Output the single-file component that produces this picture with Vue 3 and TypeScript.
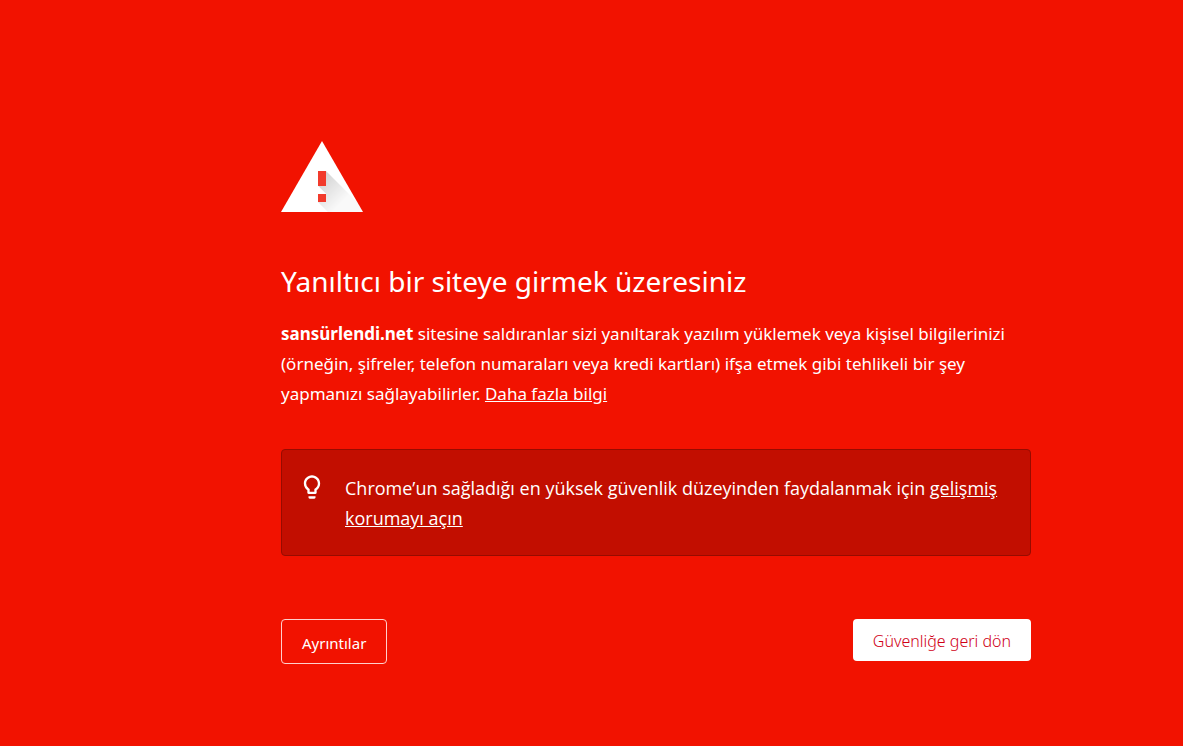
<script setup lang="ts">
const site: string = 'sansürlendi.net'
</script>

<template>
  <main class="page">
    <div class="content">
      <svg class="warning" viewBox="0 0 82 71" aria-hidden="true">
        <defs>
          <linearGradient id="shade" gradientUnits="userSpaceOnUse" x1="36" y1="38" x2="60" y2="62">
            <stop offset="0" stop-color="#000" stop-opacity="0.18" />
            <stop offset="1" stop-color="#000" stop-opacity="0.025" />
          </linearGradient>
        </defs>
        <path d="M0 71 41 0l41 71z" fill="#fff" />
        <path d="M45 30 76.5 61.5 82 71H47L37 61l8-8-8-8z" fill="url(#shade)" />
        <path d="M37 53v-8l8 8z" fill="#fff" />
        <path d="M37 30h8v15h-8zM37 53h8v8h-8z" fill="#f23b2c" />
      </svg>
      <h1>Yanıltıcı bir siteye girmek üzeresiniz</h1>
      <p class="message">
        <strong>{{ site }}</strong> sitesine saldıranlar sizi yanıltarak yazılım yüklemek veya kişisel bilgilerinizi (örneğin, şifreler, telefon numaraları veya kredi kartları) ifşa etmek gibi tehlikeli bir şey yapmanızı sağlayabilirler. <a href="#">Daha fazla bilgi</a>
      </p>
      <aside class="tip">
        <svg class="bulb" viewBox="0 0 24 24" aria-hidden="true">
          <path fill="#fff" d="M9 21c0 .55.45 1 1 1h4c.55 0 1-.45 1-1v-1H9v1zm3-19C8.14 2 5 5.14 5 9c0 2.38 1.19 4.47 3 5.74V17c0 .55.45 1 1 1h6c.55 0 1-.45 1-1v-2.26c1.81-1.27 3-3.36 3-5.74 0-3.86-3.14-7-7-7zm2.85 11.1-.85.6V16h-4v-2.3l-.85-.6A4.997 4.997 0 0 1 7 9c0-2.76 2.24-5 5-5s5 2.24 5 5c0 1.63-.8 3.16-2.15 4.1z" />
        </svg>
        <p>Chrome’un sağladığı en yüksek güvenlik düzeyinden faydalanmak için <a href="#">gelişmiş korumayı açın</a></p>
      </aside>
      <div class="actions">
        <button class="details" type="button">Ayrıntılar</button>
        <button class="safety" type="button">Güvenliğe geri dön</button>
      </div>
    </div>
  </main>
</template>

<style>
body {
  margin: 0;
  background: #f21200;
}
</style>

<style scoped>
.page {
  box-sizing: border-box;
  padding: 141px 152px 82px 281px;
  color: #fff;
  font-family: "Segoe UI", "Noto Sans", "Open Sans", sans-serif;
  font-size: 17px;
  line-height: 30px;
}
.content {
  max-width: 750px;
}
.warning {
  display: block;
  width: 82px;
  height: 71px;
}
h1 {
  margin: 49px 0 18px;
  font-size: 28px;
  line-height: 40px;
  font-weight: 400;
}
p {
  margin: 0;
}
a {
  color: inherit;
}
.tip {
  display: flex;
  box-sizing: border-box;
  gap: 19px;
  margin-top: 40px;
  padding: 23px 16px 22px;
  border: 1px solid #970b00;
  border-radius: 4px;
  background: #c20e00;
  font-family: "Segoe UI", "Open Sans", "Noto Sans", sans-serif;
  font-size: 18px;
}
.bulb {
  flex: none;
  width: 28px;
  height: 28px;
}
.actions {
  display: flex;
  justify-content: space-between;
  align-items: flex-start;
  margin-top: 63px;
}
button {
  border-radius: 4px;
  font: inherit;
  font-size: 15px;
  line-height: 20px;
}
.details {
  padding: 13px 20px 10px;
  border: 1px solid #ffd0cc;
  background: transparent;
  color: #fff;
}
.safety {
  padding: 12px 20px 10px;
  border: 0;
  background: #fff;
  color: #d00016;
  font-size: 16px;
  font-weight: 300;
}
</style>
